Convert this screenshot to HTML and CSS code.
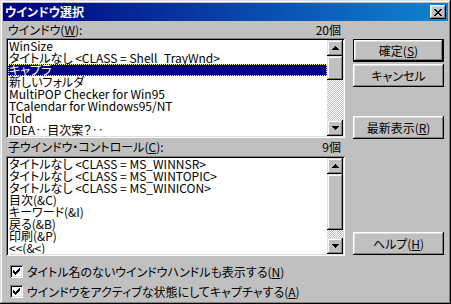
FILE: index.html
```html
<!DOCTYPE html>
<html lang="ja">
<head>
  <meta charset="UTF-8"/>
  <title>ウインドウ選択</title>
  <link rel="stylesheet" href="styles.css">
</head>
<body>
  <div class="window">
    <div class="titlebar">
      <span class="title">ウインドウ選択</span>
      <button class="close">
        <svg width="8" height="7" viewBox="0 0 8 7"><path d="M0 0h2v1h-2z M6 0h2v1h-2z M1 1h2v1h-2z M5 1h2v1h-2z M2 2h4v1h-4z M3 3h2v1h-2z M2 4h4v1h-4z M1 5h2v1h-2z M5 5h2v1h-2z M0 6h2v1h-2z M6 6h2v1h-2z" fill="#000"/></svg>
      </button>
    </div>

    <div class="body">
      <div class="main">
        <div class="label-row">
          <span>ウインドウ(<u>W</u>):</span>
          <span>20個</span>
        </div>
        <div class="listbox">
          <ul class="items">
            <li>WinSize</li>
            <li>タイトルなし &lt;CLASS = Shell_TrayWnd&gt;</li>
            <li class="selected">キャプラ</li>
            <li>新しいフォルダ</li>
            <li>MultiPOP Checker for Win95</li>
            <li>TCalendar for Windows95/NT</li>
            <li>Tcld</li>
            <li>IDEA‥目次案？‥</li>
            <li>ﾀｲﾄﾙなし &lt;CLASS = tooltips_class32&gt;</li>
          </ul>
          <div class="scrollbar">
            <div class="sb-btn"><svg width="7" height="4" viewBox="0 0 7 4"><path d="M3 0h1v1h-1z M2 1h3v1h-3z M1 2h5v1h-5z M0 3h7v1h-7z" fill="#000"/></svg></div>
            <div class="thumb thumb-a"></div>
            <div class="track"></div>
            <div class="sb-btn"><svg width="7" height="4" viewBox="0 0 7 4"><path d="M0 0h7v1h-7z M1 1h5v1h-5z M2 2h3v1h-3z M3 3h1v1h-1z" fill="#000"/></svg></div>
          </div>
        </div>

        <div class="label-row second">
          <span>子ウインドウ・コントロール(<u>C</u>):</span>
          <span>9個</span>
        </div>
        <div class="listbox">
          <ul class="items">
            <li>タイトルなし &lt;CLASS = MS_WINNSR&gt;</li>
            <li>タイトルなし &lt;CLASS = MS_WINTOPIC&gt;</li>
            <li>タイトルなし &lt;CLASS = MS_WINICON&gt;</li>
            <li>目次(&amp;C)</li>
            <li>キーワード(&amp;I)</li>
            <li>戻る(&amp;B)</li>
            <li>印刷(&amp;P)</li>
            <li>&lt;&lt;(&amp;&lt;)</li>
            <li>&gt;&gt;(&amp;&gt;)</li>
          </ul>
          <div class="scrollbar">
            <div class="sb-btn"><svg width="7" height="4" viewBox="0 0 7 4"><path d="M3 0h1v1h-1z M2 1h3v1h-3z M1 2h5v1h-5z M0 3h7v1h-7z" fill="#000"/></svg></div>
            <div class="thumb thumb-b"></div>
            <div class="track"></div>
            <div class="sb-btn"><svg width="7" height="4" viewBox="0 0 7 4"><path d="M0 0h7v1h-7z M1 1h5v1h-5z M2 2h3v1h-3z M3 3h1v1h-1z" fill="#000"/></svg></div>
          </div>
        </div>

        <div class="checks">
          <label class="check">
            <span class="box"><svg width="7" height="7" viewBox="0 0 7 7"><path d="M0 2h1v3h-1z M1 3h1v3h-1z M2 4h1v3h-1z M3 3h1v3h-1z M4 2h1v3h-1z M5 1h1v3h-1z M6 0h1v3h-1z" fill="#000"/></svg></span>
            <span>タイトル名のないウインドウハンドルも表示する(<u>N</u>)</span>
          </label>
          <label class="check">
            <span class="box"><svg width="7" height="7" viewBox="0 0 7 7"><path d="M0 2h1v3h-1z M1 3h1v3h-1z M2 4h1v3h-1z M3 3h1v3h-1z M4 2h1v3h-1z M5 1h1v3h-1z M6 0h1v3h-1z" fill="#000"/></svg></span>
            <span>ウインドウをアクティブな状態にしてキャプチャする(<u>A</u>)</span>
          </label>
        </div>
      </div>

      <div class="buttons">
        <button class="btn default">確定(<u>S</u>)</button>
        <button class="btn">キャンセル</button>
        <button class="btn refresh">最新表示(<u>R</u>)</button>
        <button class="btn help">ヘルプ(<u>H</u>)</button>
      </div>
    </div>
  </div>
</body>
</html>
```

FILE: styles.css
```css
* { margin:0; padding:0; box-sizing:border-box }
body {
  background:#c0c0c0; overflow:hidden;
  font-family:"Noto Sans CJK JP","Noto Sans",sans-serif;
  font-size:12px; font-feature-settings:"palt"; color:#000;
}
u { text-decoration:underline; text-underline-offset:1px }

/* window frame */
.window {
  width:451px; height:304px; padding:3px;
  background:#c0c0c0;
  box-shadow: inset -1px -1px #000, inset 1px 1px #dfdfdf,
              inset -2px -2px #808080, inset 2px 2px #fff;
}
.titlebar {
  height:18px; display:flex; align-items:center; justify-content:space-between;
  padding:0 2px 0 2px;
  background:linear-gradient(to right,#000080,#1084d0);
  color:#fff; font-weight:bold; line-height:12px;
}
.title { letter-spacing:0 }
.close {
  width:16px; height:14px; border:none;
  display:flex; align-items:center; justify-content:center;
  background:#c0c0c0;
  box-shadow: inset -1px -1px #000, inset 1px 1px #fff,
              inset -2px -2px #808080, inset 2px 2px #dfdfdf;
}

/* body */
.body { display:flex; gap:8px; padding:0 4px 0 3px }
.main { width:339px; display:flex; flex-direction:column }
.label-row {
  height:17px; display:flex; align-items:center; justify-content:space-between;
  padding:0 4px 0 2px; line-height:12px;
}
.label-row.second { height:18px }

/* list boxes */
.listbox {
  height:100px; padding:2px; display:flex; background:#fff;
  box-shadow: inset 1px 1px #808080, inset -1px -1px #fff,
              inset 2px 2px #000, inset -2px -2px #dfdfdf;
}
.items {
  flex:1; list-style:none; overflow:hidden; line-height:12px;
}
.items li { height:12px; padding-left:1px; white-space:nowrap }
.items li.selected {
  background:#000080; color:#fff;
  outline:1px dotted #ffff80; outline-offset:-1px;
}
.scrollbar { width:16px; display:flex; flex-direction:column }
.sb-btn, .thumb {
  background:#c0c0c0;
  box-shadow: inset -1px -1px #000, inset 1px 1px #dfdfdf,
              inset -2px -2px #808080, inset 2px 2px #fff;
}
.sb-btn { height:16px; display:flex; align-items:center; justify-content:center }
.thumb-a { height:24px }
.thumb-b { height:56px }
.track {
  flex:1;
  background:repeating-conic-gradient(#fff 0 25%, #c0c0c0 0 50%) 0 0/2px 2px;
}

/* check boxes */
.checks { display:flex; flex-direction:column; gap:7px; padding:9px 0 0 4px }
.check { display:flex; align-items:center; gap:4px; height:13px; line-height:12px }
.box {
  width:13px; height:13px; background:#fff;
  display:flex; align-items:center; justify-content:center;
  box-shadow: inset 1px 1px #808080, inset -1px -1px #fff,
              inset 2px 2px #000, inset -2px -2px #dfdfdf;
}

/* buttons */
.buttons { width:91px; display:flex; flex-direction:column; gap:2px; padding-top:18px }
.btn {
  height:23px; width:91px; border:none;
  font:inherit; color:#000; line-height:12px;
  display:flex; align-items:center; justify-content:center;
  background:#c0c0c0;
  box-shadow: inset -1px -1px #000, inset 1px 1px #fff,
              inset -2px -2px #808080, inset 2px 2px #dfdfdf;
}
.btn.default { border:1px solid #000 }
.btn.refresh { margin-top:27px }
.btn.help { margin-top:91px }
```
